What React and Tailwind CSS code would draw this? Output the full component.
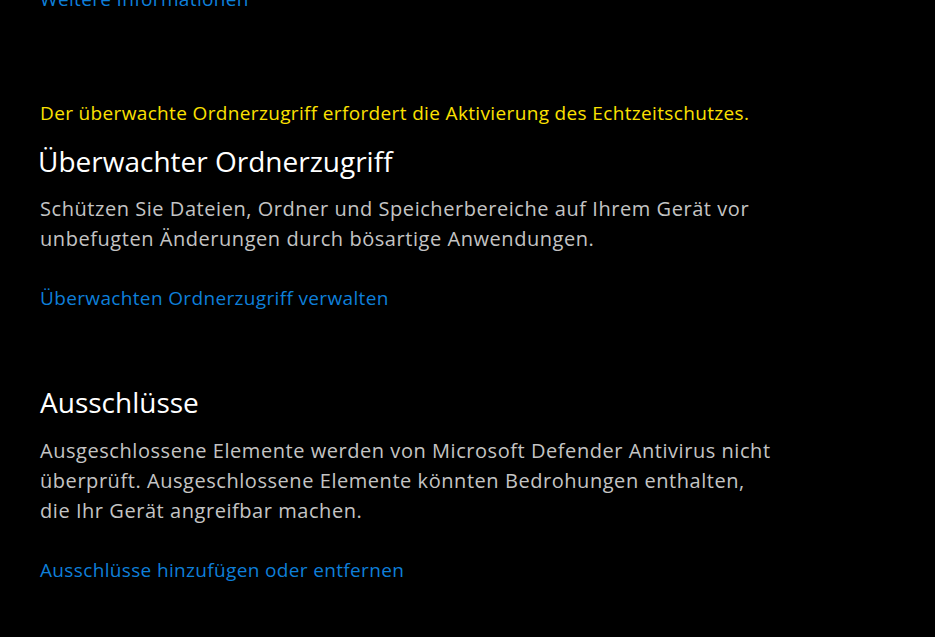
export default function App() {
  const font = { fontFamily: '"Open Sans", "Noto Sans", sans-serif' };
  return (
    <div className="w-[935px] h-[637px] bg-black overflow-hidden" style={font}>
      <div className="pl-[40px] flex flex-col">
        <a className="-mt-[16px] text-[19px] leading-[30px] text-[#0e7fd9] tracking-[0.35px]">Weitere Informationen</a>
        <p className="mt-[84px] text-[19px] leading-[30px] text-[#fce100] tracking-[0.35px]">
          Der überwachte Ordnerzugriff erfordert die Aktivierung des Echtzeitschutzes.
        </p>
        <h2 className="-ml-[2px] mt-[13px] text-[28px] leading-[40px] text-white">Überwachter Ordnerzugriff</h2>
        <p className="mt-[13px] text-[20px] leading-[30px] text-[#c4c4c4] tracking-[0.55px]">
          Schützen Sie Dateien, Ordner und Speicherbereiche auf Ihrem Gerät vor
          <br />
          unbefugten Änderungen durch bösartige Anwendungen.
        </p>
        <a className="mt-[29px] text-[19px] leading-[30px] text-[#0e7fd9] tracking-[0.35px]">Überwachten Ordnerzugriff verwalten</a>
        <h2 className="mt-[69px] text-[28px] leading-[40px] text-white">Ausschlüsse</h2>
        <p className="mt-[14px] text-[20px] leading-[30px] text-[#c4c4c4] tracking-[0.55px]">
          Ausgeschlossene Elemente werden von Microsoft Defender Antivirus nicht
          <br />
          überprüft. Ausgeschlossene Elemente könnten Bedrohungen enthalten,
          <br />
          die Ihr Gerät angreifbar machen.
        </p>
        <a className="mt-[29px] text-[19px] leading-[30px] text-[#0e7fd9] tracking-[0.35px]">Ausschlüsse hinzufügen oder entfernen</a>
      </div>
    </div>
  );
}
